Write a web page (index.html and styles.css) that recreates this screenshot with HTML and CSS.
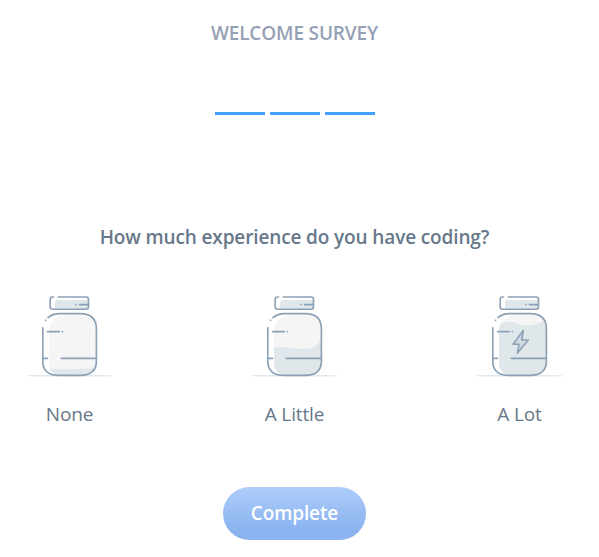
FILE: index.html
```html
<!DOCTYPE html>
<html lang="en">
<head>
<meta charset="utf-8">
<title>Welcome Survey</title>
<link rel="stylesheet" href="styles.css">
</head>
<body>
<svg class="defs" width="0" height="0" aria-hidden="true">
  <defs>
    <clipPath id="jar-inner"><path d="M43 30.5H63Q76 31.500 76 45V77Q76 90 63 90H42Q29 90 29 77V45Q30 33 43 30.500Z"/></clipPath>
    <g id="jar-lines">
      <path class="lid" d="M37 15H68V24H35V18Q35 15 37 15Z"/>
      <path class="ground" d="M12 90.700H86"/>
      <path class="ground" d="M8 90.700H8.500M10 90.700H10.200M89 90.700H89.500M91 90.700H91.200"/>
      <path d="M33.500 12H32.500Q30.200 12 30.200 14.500V21.700Q30.200 24.200 32.700 24.200H66Q68.500 24.200 68.500 21.700V14.500Q68.500 12 66 12H38.300"/>
      <path d="M59.500 19.600H68.300M55.700 19.600H55.900"/>
      <path d="M28 32.600Q32.500 28.600 40 28.600H60Q76.400 28.600 76.400 44V76Q76.400 90.400 60 90.400H39Q22.800 90.400 22.800 76V42.700"/>
      <path d="M25.500 35.300H25.700M27.500 46.600H39.300M42.300 46.600H42.500M23 73.400H27.500M41.300 73.400H76"/>
    </g>
  </defs>
</svg>
<main class="survey">
  <h1 class="title">WELCOME SURVEY</h1>
  <div class="progress"><span class="step"></span><span class="step"></span><span class="step"></span></div>
  <h2 class="question">How much experience do you have coding?</h2>
  <div class="options">
    <div class="option">
      <svg class="jar" viewBox="0 0 100 100">
        <g clip-path="url(#jar-inner)"><path class="glass" d="M28 29H77V91H28Z"/><path class="fill" d="M28 83Q36 85 48 84.500T77 83V91H28Z"/></g>
        <use href="#jar-lines"/>
      </svg>
      <span class="label">None</span>
    </div>
    <div class="option">
      <svg class="jar" viewBox="0 0 100 100">
        <g clip-path="url(#jar-inner)"><path class="glass" d="M28 29H77V91H28Z"/><path class="fill" d="M28 63C37 60 46 64 58 64C69 64 75 60 76 51H77V91H28Z"/></g>
        <use href="#jar-lines"/>
      </svg>
      <span class="label">A Little</span>
    </div>
    <div class="option">
      <svg class="jar" viewBox="0 0 100 100">
        <g clip-path="url(#jar-inner)"><path class="glass" d="M28 29H77V91H28Z"/><path class="fill" d="M28 41C36 34 43 37 49 39C59 43 69 38 77 35V91H28Z"/></g>
        <use href="#jar-lines"/>
        <path class="bolt" d="M53.300 45.500L43 59.200H49L47.500 68L58.300 55H51.800Z"/>
      </svg>
      <span class="label">A Lot</span>
    </div>
  </div>
  <button class="complete" type="button">Complete</button>
</main>
</body>
</html>
```
FILE: styles.css
```css
body {
  margin: 0;
  background: #fff;
  font-family: "Open Sans", sans-serif;
  letter-spacing: -0.13px;
}

.defs {
  display: block;
}

.survey {
  display: flex;
  flex-direction: column;
  align-items: center;
  width: 589px;
  padding-top: 20px;
}

.title {
  margin: 0;
  font-size: 19px;
  line-height: 26px;
  font-weight: 600;
  letter-spacing: -0.16px;
  color: #959fb5;
}

.progress {
  display: flex;
  gap: 5px;
  margin-top: 66px;
}

.step {
  width: 50px;
  height: 3px;
  background: #42a1ff;
}

.question {
  margin: 109px 0 0;
  font-size: 19px;
  line-height: 26px;
  font-weight: 600;
  color: #66788a;
}

.options {
  display: flex;
  gap: 125px;
  margin-top: 35px;
}

.option {
  display: flex;
  flex-direction: column;
  align-items: center;
  width: 100px;
}

.jar {
  width: 100px;
  height: 100px;
  fill: none;
  stroke: #8ca1b5;
  stroke-width: 1.65;
  stroke-linecap: round;
  stroke-linejoin: round;
}

.glass {
  fill: #f5f5f5;
  stroke: none;
}

.fill,
.lid {
  fill: #e0e7eb;
  stroke: none;
}

.ground {
  stroke: #e0e8ec;
}

.bolt {
  fill: #cfdae2;
}

.label {
  margin-top: 16px;
  font-size: 19px;
  line-height: 26px;
  color: #66788a;
}

.complete {
  width: 143px;
  height: 53px;
  margin-top: 60px;
  padding: 0 0 1px;
  border: 0;
  border-radius: 27px;
  background: linear-gradient(#aecdfb, #8ab3ef 80%);
  font: 600 19px/26px "Open Sans", sans-serif;
  letter-spacing: -0.13px;
  color: #fff;
}
```
